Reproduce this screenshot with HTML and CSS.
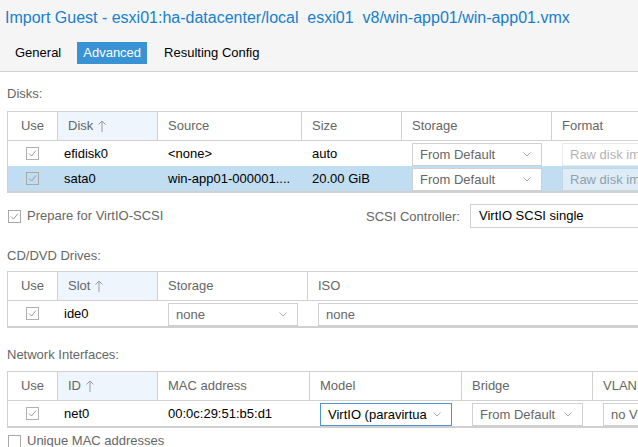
FILE: index.html
```html
<!DOCTYPE html>
<html>
<head>
<meta charset="utf-8">
<link rel="stylesheet" href="styles.css">
</head>
<body>
<div class="head">
  <div class="title">Import Guest - esxi01:ha-datacenter/local  esxi01  v8/win-app01/win-app01.vmx</div>
  <div class="tabs">
    <span class="tab">General</span>
    <span class="tab active">Advanced</span>
    <span class="tab last">Resulting Config</span>
  </div>
</div>
<div class="main">
  <div class="label">Disks:</div>
  <div class="grid grid-disks">
    <div class="ghead">
      <div class="hcell center">Use</div>
      <div class="hcell sorted">Disk <svg class="sort" width="8" height="12" viewBox="0 0 8 12"><line x1="4" y1="1" x2="4" y2="12" stroke="#999"/><polyline points="0.5,4.5 4,1 7.5,4.5" fill="none" stroke="#999"/></svg></div>
      <div class="hcell">Source</div>
      <div class="hcell">Size</div>
      <div class="hcell">Storage</div>
      <div class="hcell">Format</div>
    </div>
    <div class="row">
      <div class="cell center"><svg class="cb" width="13" height="13" viewBox="0 0 13 13"><rect x="0.5" y="0.5" width="12" height="12" fill="none" stroke="#b0b0b0"/><polyline points="3,6.5 5.5,9 10,3.5" fill="none" stroke="#999"/></svg></div>
      <div class="cell id">efidisk0</div>
      <div class="cell">&lt;none&gt;</div>
      <div class="cell">auto</div>
      <div class="cell"><div class="combo"><span class="val muted">From Default</span><span class="trig"><svg width="8" height="5" viewBox="0 0 8 5"><polyline points="0.5,0.5 4,4 7.5,0.5" fill="none" stroke="#aaa"/></svg></span></div></div>
      <div class="cell"><div class="combo disabled"><span class="val">Raw disk im</span></div></div>
    </div>
    <div class="row sel">
      <div class="cell center"><svg class="cb" width="13" height="13" viewBox="0 0 13 13"><rect x="0.5" y="0.5" width="12" height="12" fill="none" stroke="#a8a8a8"/><polyline points="3,6.5 5.5,9 10,3.5" fill="none" stroke="#999"/></svg></div>
      <div class="cell id">sata0</div>
      <div class="cell">win-app01-000001....</div>
      <div class="cell">20.00 GiB</div>
      <div class="cell"><div class="combo"><span class="val muted">From Default</span><span class="trig"><svg width="8" height="5" viewBox="0 0 8 5"><polyline points="0.5,0.5 4,4 7.5,0.5" fill="none" stroke="#aaa"/></svg></span></div></div>
      <div class="cell"><div class="combo disabled"><span class="val">Raw disk im</span></div></div>
    </div>
  </div>

  <div class="formrow">
    <div class="check"><svg width="13" height="13" viewBox="0 0 13 13"><rect x="0.5" y="0.5" width="12" height="12" fill="#fff" stroke="#a8a8a8"/><polyline points="3,6.5 5.5,9 10,3.5" fill="none" stroke="#999"/></svg><span>Prepare for VirtIO-SCSI</span></div>
    <div class="flabel">SCSI Controller:</div>
    <div class="field">VirtIO SCSI single</div>
  </div>

  <div class="label gap-cd">CD/DVD Drives:</div>
  <div class="grid grid-cd">
    <div class="ghead">
      <div class="hcell center">Use</div>
      <div class="hcell sorted">Slot <svg class="sort" width="8" height="12" viewBox="0 0 8 12"><line x1="4" y1="1" x2="4" y2="12" stroke="#999"/><polyline points="0.5,4.5 4,1 7.5,4.5" fill="none" stroke="#999"/></svg></div>
      <div class="hcell">Storage</div>
      <div class="hcell">ISO</div>
    </div>
    <div class="row">
      <div class="cell center"><svg class="cb" width="13" height="13" viewBox="0 0 13 13"><rect x="0.5" y="0.5" width="12" height="12" fill="none" stroke="#b0b0b0"/><polyline points="3,6.5 5.5,9 10,3.5" fill="none" stroke="#999"/></svg></div>
      <div class="cell id">ide0</div>
      <div class="cell"><div class="combo"><span class="val muted">none</span><span class="trig"><svg width="8" height="5" viewBox="0 0 8 5"><polyline points="0.5,0.5 4,4 7.5,0.5" fill="none" stroke="#aaa"/></svg></span></div></div>
      <div class="cell"><div class="combo"><span class="val muted">none</span></div></div>
    </div>
  </div>

  <div class="label gap-net">Network Interfaces:</div>
  <div class="grid grid-net">
    <div class="ghead">
      <div class="hcell center">Use</div>
      <div class="hcell sorted">ID <svg class="sort" width="8" height="12" viewBox="0 0 8 12"><line x1="4" y1="1" x2="4" y2="12" stroke="#999"/><polyline points="0.5,4.5 4,1 7.5,4.5" fill="none" stroke="#999"/></svg></div>
      <div class="hcell">MAC address</div>
      <div class="hcell">Model</div>
      <div class="hcell">Bridge</div>
      <div class="hcell">VLAN</div>
    </div>
    <div class="row">
      <div class="cell center"><svg class="cb" width="13" height="13" viewBox="0 0 13 13"><rect x="0.5" y="0.5" width="12" height="12" fill="none" stroke="#b0b0b0"/><polyline points="3,6.5 5.5,9 10,3.5" fill="none" stroke="#999"/></svg></div>
      <div class="cell id">net0</div>
      <div class="cell">00:0c:29:51:b5:d1</div>
      <div class="cell"><div class="combo focus"><span class="val">VirtIO (paravirtua</span><span class="trig"><svg width="8" height="5" viewBox="0 0 8 5"><polyline points="0.5,0.5 4,4 7.5,0.5" fill="none" stroke="#aaa"/></svg></span></div></div>
      <div class="cell"><div class="combo"><span class="val muted">From Default</span><span class="trig"><svg width="8" height="5" viewBox="0 0 8 5"><polyline points="0.5,0.5 4,4 7.5,0.5" fill="none" stroke="#aaa"/></svg></span></div></div>
      <div class="cell"><div class="combo"><span class="val muted">no V</span></div></div>
    </div>
  </div>

  <div class="check gap-mac"><svg width="13" height="13" viewBox="0 0 13 13"><rect x="0.5" y="0.5" width="12" height="12" fill="#fff" stroke="#a8a8a8"/></svg><span>Unique MAC addresses</span></div>
</div>
</body>
</html>
```

FILE: styles.css
```css
html, body {
  margin: 0;
  padding: 0;
}
body {
  width: 638px;
  height: 447px;
  overflow: hidden;
  background: #fff;
  font-family: "Liberation Sans", Arial, sans-serif;
  font-size: 13px;
  color: #000;
}
.head {
  height: 71px;
  background: #f5f5f5;
  border-bottom: 1px solid #d0d0d0;
}
.title {
  padding: 10px 0 0 5px;
  font-size: 16px;
  line-height: 16px;
  color: #157fcc;
  white-space: pre;
}
.tabs {
  display: flex;
  gap: 10px;
  margin-top: 16px;
  padding-left: 9px;
}
.tab {
  height: 22px;
  line-height: 22px;
  padding: 0 6px;
}
.tab.last {
  margin-left: 1px;
}
.tab.active {
  background: #3892d4;
  color: #fff;
}
.main {
  padding: 14px 0 0 7px;
}
.label {
  color: #666;
  line-height: 16px;
  margin-bottom: 9px;
}
.gap-cd { margin-top: 20px; margin-bottom: 7px; }
.gap-net { margin-top: 19px; margin-bottom: 8px; }
.grid {
  width: 631px;
  border: 1px solid #d0d0d0;
  border-right: 0;
  border-bottom-width: 2px;
  overflow: hidden;
}
.ghead, .row {
  display: grid;
}
.grid-disks .ghead, .grid-disks .row {
  grid-template-columns: 50px 100px 144px 100px 150px 1fr;
}
.grid-cd .ghead, .grid-cd .row {
  grid-template-columns: 50px 100px 150px 1fr;
}
.grid-net .ghead, .grid-net .row {
  grid-template-columns: 50px 100px 152px 152px 131px 1fr;
}
.ghead {
  height: 28px;
  border-bottom: 1px solid #d0d0d0;
}
.hcell {
  border-right: 1px solid #d0d0d0;
  padding-left: 10px;
  line-height: 28px;
  color: #666;
  display: flex;
  align-items: center;
  white-space: nowrap;
}
.hcell:last-child {
  border-right: 0;
}
.hcell.center {
  justify-content: center;
  padding-left: 0;
}
.hcell.sorted {
  background: #eef5fd;
}
.sort {
  margin-left: 5px;
}
.row {
  height: 25px;
}
.row.sel {
  background: #c1ddf1;
}
.cell {
  display: flex;
  align-items: center;
  padding: 0 10px;
  white-space: nowrap;
  overflow: hidden;
  min-width: 0;
}
.cell:last-child {
  padding-right: 0;
}
.cell.center {
  justify-content: center;
  padding: 0 1px 0 0;
}
.cell.id {
  padding-left: 6px;
}
.combo {
  box-sizing: border-box;
  width: 100%;
  height: 23px;
  margin-top: 2px;
  border: 1px solid #d0d0d0;
  background: #fff;
  display: flex;
  align-items: center;
  padding: 0 0 0 7px;
  overflow: hidden;
}
.cell:last-child .combo {
  border-right: 0;
}
.combo .val {
  flex: 1;
  white-space: nowrap;
  overflow: hidden;
}
.trig {
  flex: none;
  width: 22px;
  display: flex;
  justify-content: flex-end;
  padding-right: 10px;
  box-sizing: border-box;
}
.muted {
  color: #666;
}
.combo.disabled {
  opacity: 0.45;
}
.combo.disabled .val {
  color: #555;
}
.combo.focus {
  border-color: #4b96d8;
}
.formrow {
  display: flex;
  align-items: center;
  height: 24px;
  margin-top: 11px;
}
.check {
  display: flex;
  align-items: center;
  color: #666;
  line-height: 16px;
}
.check svg {
  margin: 0 6px 0 1px;
}
.formrow .check {
  width: 359px;
  flex: none;
}
.flabel {
  flex: none;
  width: 104px;
  color: #666;
}
.field {
  flex: none;
  box-sizing: border-box;
  width: 168px;
  height: 24px;
  border: 1px solid #d0d0d0;
  border-right: 0;
  padding-left: 8px;
  line-height: 22px;
  background: #fff;
}
.gap-mac {
  margin-top: 5px;
}
```
